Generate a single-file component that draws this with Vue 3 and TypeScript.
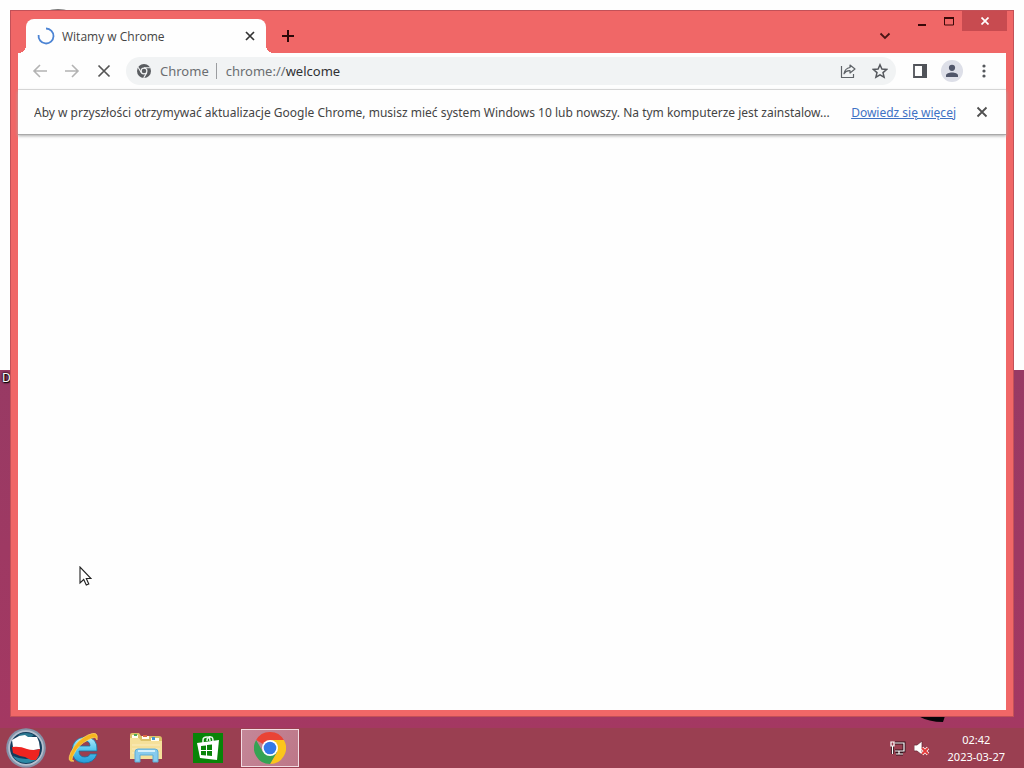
<script setup lang="ts">
import { ref } from 'vue'

const tabTitle = ref('Witamy w Chrome')
const siteLabel = ref('Chrome')
const address = ref('chrome://')
const page = ref('welcome')
const notice = ref(
  'Aby w przyszłości otrzymywać aktualizacje Google Chrome, musisz mieć system Windows 10 lub nowszy. Na tym komputerze jest zainstalow...',
)
const time = ref('02:42')
const date = ref('2023-03-27')
</script>

<template>
  <div class="desktop">
    <main class="workspace">
      <span class="desktop-label">D</span>
      <svg class="speck speck-top" width="24" height="4" viewBox="0 0 24 4"><path d="M0 4Q12 0 24 4z" fill="#777" /></svg>
      <svg class="speck speck-bottom" width="30" height="8" viewBox="0 0 30 8"><path d="M0 0h27l-2 6q-14 0-25-6z" fill="#080408" /></svg>

      <section class="window">
        <header class="titlebar">
          <div class="tab">
            <svg class="spinner" width="18" height="18" viewBox="0 0 18 18"><path d="M9 1.500A7.500 7.500 0 1 1 1.600 8" fill="none" stroke="#4c84d4" stroke-width="1.800" /></svg>
            <span class="tab-title">{{ tabTitle }}</span>
            <button class="icon-button tab-close" aria-label="Zamknij kartę">
              <svg width="10" height="10" viewBox="0 0 10 10"><path d="M1 1l8 8M9 1l-8 8" stroke="#333" stroke-width="1.700" /></svg>
            </button>
          </div>
          <button class="icon-button new-tab" aria-label="Nowa karta">
            <svg width="12" height="12" viewBox="0 0 12 12"><path d="M6 0v12M0 6h12" stroke="#2b0808" stroke-width="2" /></svg>
          </button>
          <span class="spacer"></span>
          <button class="icon-button tab-search" aria-label="Wyszukaj karty">
            <svg width="12" height="8" viewBox="0 0 12 8"><path d="M1.500 1.500L6 6l4.500-4.500" fill="none" stroke="#4a1515" stroke-width="1.800" /></svg>
          </button>
          <div class="caption">
            <button class="icon-button caption-button minimize" aria-label="Minimalizuj">
              <svg width="8" height="12" viewBox="0 0 8 12"><path d="M0 9h8v2H0z" fill="#390909" /></svg>
            </button>
            <button class="icon-button caption-button" aria-label="Maksymalizuj">
              <svg width="10" height="10" viewBox="0 0 10 10"><path d="M.5 1v8h9V1" fill="none" stroke="#390909" /><path d="M0 1h10v2H0z" fill="#390909" /></svg>
            </button>
            <button class="icon-button caption-close" aria-label="Zamknij">
              <svg width="8" height="8" viewBox="0 0 8 8"><path d="M.5.5l7 7M7.500.5l-7 7" stroke="#fff" stroke-width="1.700" /></svg>
            </button>
          </div>
        </header>

        <div class="client">
          <nav class="toolbar">
            <button class="icon-button nav-button" aria-label="Wstecz">
              <svg width="16" height="16" viewBox="0 0 16 16"><path d="M15 8H2M8 2L2 8l6 6" fill="none" stroke="#b3b3b3" stroke-width="1.600" /></svg>
            </button>
            <button class="icon-button nav-button" aria-label="Dalej">
              <svg width="16" height="16" viewBox="0 0 16 16"><path d="M1 8h13M8 2l6 6-6 6" fill="none" stroke="#b3b3b3" stroke-width="1.600" /></svg>
            </button>
            <button class="icon-button nav-button" aria-label="Zatrzymaj">
              <svg width="14" height="14" viewBox="0 0 14 14"><path d="M1.500 1.500l11 11M12.500 1.500l-11 11" stroke="#555" stroke-width="1.700" /></svg>
            </button>
            <div class="omnibox">
              <svg class="site-icon" width="14" height="14" viewBox="0 0 14 14">
                <circle cx="7" cy="7" r="7" fill="#5a5d61" />
                <circle cx="7" cy="7" r="2.900" fill="#5a5d61" stroke="#f1f3f4" stroke-width="1.200" />
                <path d="M7 3.800h6.200M4.200 8.600L1.100 3.200M9.800 8.600l-3.100 5.300" stroke="#f1f3f4" stroke-width="1.100" />
              </svg>
              <span class="site-label">{{ siteLabel }}</span>
              <span class="separator"></span>
              <span class="address">{{ address }}<b>{{ page }}</b></span>
              <button class="icon-button nav-button" aria-label="Udostępnij">
                <svg width="16" height="16" viewBox="0 0 16 16"><path d="M1.500 3v11.500h12V11M10 2l5 4-5 4V7.700Q6 7.400 4 10.800 4.800 5.400 10 4.500z" fill="none" stroke="#5f6368" stroke-width="1.200" stroke-linejoin="round" /></svg>
              </button>
              <button class="icon-button nav-button" aria-label="Dodaj zakładkę">
                <svg width="16" height="16" viewBox="0 0 16 16"><path d="M8 1.800l1.900 4.300 4.700.4-3.600 3.100 1.100 4.600L8 11.800l-4.100 2.400L5 9.600 1.400 6.500l4.700-.4z" fill="none" stroke="#55585d" stroke-width="1.500" /></svg>
              </button>
            </div>
            <button class="icon-button nav-button" aria-label="Panel boczny">
              <svg width="14" height="14" viewBox="0 0 14 14"><path d="M1 1h12v12H1z" fill="none" stroke="#505359" stroke-width="1.800" /><path d="M9 0h5v14H9z" fill="#505359" /></svg>
            </button>
            <button class="icon-button nav-button" aria-label="Profil">
              <svg width="22" height="22" viewBox="0 0 22 22"><circle cx="11" cy="11" r="11" fill="#dddfe8" /><circle cx="11" cy="7.800" r="3.100" fill="#50566a" /><path d="M5 17v-1.500c0-4 12-4 12 0V17z" fill="#50566a" /></svg>
            </button>
            <button class="icon-button nav-button" aria-label="Menu">
              <svg width="4" height="14" viewBox="0 0 4 14" fill="#55585d"><circle cx="2" cy="2" r="1.600" /><circle cx="2" cy="7" r="1.600" /><circle cx="2" cy="12" r="1.600" /></svg>
            </button>
          </nav>
          <div class="infobar">
            <span class="notice">{{ notice }}</span>
            <a class="more" href="#">Dowiedz się więcej</a>
            <button class="icon-button nav-button" aria-label="Zamknij komunikat">
              <svg width="12" height="12" viewBox="0 0 12 12"><path d="M1.500 1.500l9 9M10.500 1.500l-9 9" stroke="#505050" stroke-width="1.800" /></svg>
            </button>
          </div>
          <div class="page"></div>
        </div>
      </section>

      <svg class="pointer" width="13" height="20" viewBox="0 0 13 20"><path d="M1 1v16l3.700-3.500L7.300 19l2.500-1-2.500-5.500H12z" fill="#fff" stroke="#222" stroke-width="1.100" /></svg>
    </main>

    <footer class="taskbar">
      <button class="icon-button start" aria-label="Start">
        <svg width="42" height="40" viewBox="0 0 42 40">
          <circle cx="21" cy="20" r="19.800" fill="#8492a8" />
          <circle cx="21" cy="20" r="17.800" fill="#b5bfce" />
          <circle cx="21" cy="20" r="16" fill="#123c5c" />
          <path d="M8 28q13 6 26 0-4 7-13 7T8 28z" fill="#2b89a5" />
          <path d="M13 7q8-4 16 0l-4 3-9-1z" fill="#2b7891" />
          <path d="M7 12l7-4 6-1 3 2 9 0 2 5 1 7-12 2-15-4z" fill="#fff" />
          <path d="M7 19q8-1 15 2 6 2 13 0l-1 6-3 5-5 0-6-3-5-1-7-3z" fill="#ee2420" />
        </svg>
      </button>
      <button class="icon-button task" aria-label="Internet Explorer">
        <svg width="32" height="32" viewBox="0 0 32 32">
          <defs><linearGradient id="ieBlue" x1="0" y1="0" x2="0" y2="1"><stop stop-color="#b5edff" /><stop offset=".5" stop-color="#54c5ef" /><stop offset="1" stop-color="#239bd8" /></linearGradient></defs>
          <path d="M29 19H11q0 6 6 6 4 0 5-3h7q-3 9-13 9-12-1-12-13Q5 6 17 5q13 0 12 14zM11 14h11q0-5-5-5-6 0-6 5z" fill="url(#ieBlue)" fill-rule="evenodd" stroke="#1b719e" stroke-width=".8" />
          <path d="M6 29q-8 2-3-9Q9 8 20 3q11-5 9 5-1-5-9 0Q10 13 6 22q-4 7 0 7z" fill="#f7b51e" stroke="#ffd868" stroke-width=".7" />
        </svg>
      </button>
      <button class="icon-button task" aria-label="Eksplorator plików">
        <svg width="32" height="30" viewBox="0 0 32 30">
          <path d="M0 2q0-2 2-2h7l2 3h18q3 0 3 3v20H0z" fill="#dbc168" />
          <path d="M2 2h6v3H2zM12 3h7v3h-7zM21 5h8v3h-8z" fill="#fffef0" />
          <path d="M4 1h3v2H4z" fill="#4baa58" /><path d="M13 2h4v2h-4z" fill="#dc6843" /><path d="M22 4h3v3h-3z" fill="#4195ce" />
          <path d="M0 5h9l2 3h21v18H0z" fill="#f5e09a" />
          <path d="M2 12h28M2 16h28M2 20h28" stroke="#faecc0" />
          <path d="M5 29V19q0-3 3-3h17q3 0 3 3v10h-5v-7H10v7z" fill="#87cbed" stroke="#5cacd6" />
          <path d="M8 18h17" stroke="#d4f0fb" stroke-width="2" />
        </svg>
      </button>
      <button class="icon-button task" aria-label="Sklep">
        <svg width="30" height="30" viewBox="0 0 30 30">
          <path d="M0 0h30v30H0z" fill="#088408" />
          <path d="M10 10V7q0-3 4-3 3 0 3 4M14 8q0-5 4-4 2 0 2 4" fill="none" stroke="#edf9ed" stroke-width="1.500" />
          <path d="M4 10l22-3-2 20-17-2z" fill="#fff" />
          <path d="M8 13l5-.5v4.500H8zM14 12l5-.5V17h-5zM8 18h5v4.500L8 22zM14 18h5v5l-5-.5z" fill="#088408" />
        </svg>
      </button>
      <button class="icon-button task active" aria-label="Google Chrome">
        <svg width="32" height="32" viewBox="0 0 32 32">
          <path d="M2.140 8A16 16 0 0 1 29.860 8H16v8z" fill="#ea4335" />
          <path d="M29.860 8A16 16 0 0 1 16 32l7-12L16 8z" fill="#fbc51c" />
          <path d="M2.140 8A16 16 0 0 0 16 32l7-12-7-4-7 4z" fill="#34a353" />
          <circle cx="16" cy="16" r="8" fill="#fff" /><circle cx="16" cy="16" r="6.300" fill="#3479e8" />
        </svg>
      </button>
      <span class="spacer"></span>
      <div class="tray">
        <svg width="16" height="16" viewBox="0 0 16 16"><path d="M5 3h9v8H5M9 11v3M6 14h7M2.500 6v8" fill="none" stroke="#34131c" stroke-width="3" /><path d="M5 3h9v8H5M9 11v3M6 14h7M1 2h3v4H1zM2.500 6v8" fill="none" stroke="#fff" stroke-width="1.200" /></svg>
        <svg width="16" height="16" viewBox="0 0 16 16"><path d="M0 5h3l5-4v14l-5-4H0z" fill="#fff" stroke="#6d2b39" stroke-width=".8" /><path d="M8 8l6 6M14 8l-6 6" stroke="#fff" stroke-width="3.400" /><path d="M8 8l6 6M14 8l-6 6" stroke="#e33b3b" stroke-width="2" /></svg>
      </div>
      <div class="clock"><span>{{ time }}</span><span>{{ date }}</span></div>
    </footer>
  </div>
</template>

<style>
body {
  margin: 0;
}
</style>

<style scoped>
.desktop {
  display: flex;
  flex-direction: column;
  height: 100vh;
  overflow: hidden;
  font-family: "Segoe UI", "Noto Sans", sans-serif;
  font-size: 12px;
  color: #444;
}
.workspace {
  position: relative;
  flex: 1;
  background: linear-gradient(to bottom, #fefefe 0, #fefefe 370px, #983a64 370px, #a43862 100%);
}
.desktop-label {
  position: absolute;
  top: 370px;
  left: 2px;
  line-height: 16px;
  color: #fff;
  text-shadow: 1px 1px 1px #000, 0 0 2px #000, 0 0 3px #000;
}
.speck {
  position: absolute;
}
.speck-top {
  top: 7px;
  left: 46px;
}
.speck-bottom {
  right: 76px;
  bottom: 4px;
}
.window {
  position: absolute;
  inset: 10px 10px 11px;
  box-sizing: border-box;
  display: flex;
  flex-direction: column;
  padding: 0 7px 6px;
  border: 1px solid #c25158;
  background: #f06767;
}
.icon-button {
  display: flex;
  align-items: center;
  justify-content: center;
  flex: none;
  padding: 0;
  border: 0;
  background: none;
}
.spacer {
  flex: 1;
}
.titlebar {
  display: flex;
  height: 42px;
}
.tab {
  position: relative;
  box-sizing: border-box;
  display: flex;
  align-items: center;
  width: 240px;
  height: 34px;
  margin: 8px 0 0 8px;
  padding: 0 10px 0 11px;
  border-radius: 8px 8px 0 0;
  background: #fefefe;
}
.tab::before,
.tab::after {
  position: absolute;
  bottom: 0;
  width: 8px;
  height: 8px;
  content: "";
}
.tab::before {
  right: 100%;
  background: radial-gradient(circle at 0 0, transparent 8px, #fefefe 8px);
}
.tab::after {
  left: 100%;
  background: radial-gradient(circle at 100% 0, transparent 8px, #fefefe 8px);
}
.tab-title {
  flex: 1;
  margin-left: 7px;
  font-family: "Segoe UI", "Open Sans", sans-serif;
}
.tab-close {
  width: 12px;
  height: 16px;
}
.new-tab {
  width: 28px;
  height: 28px;
  margin: 11px 0 0 8px;
}
.tab-search {
  width: 28px;
  height: 28px;
  margin: 11px 9px 0 0;
}
.caption {
  display: flex;
  height: 20px;
  margin-right: -1px;
}
.caption-button {
  width: 27px;
}
.caption-close {
  width: 45px;
  background: #c84b50;
}
.minimize {
  align-items: flex-end;
}
.minimize svg {
  margin-bottom: 4px;
}
.client {
  flex: 1;
  display: flex;
  flex-direction: column;
  background: #fefefe;
}
.toolbar {
  display: flex;
  align-items: center;
  height: 36px;
  padding: 0 6px;
  border-bottom: 1px solid #dedede;
}
.nav-button {
  width: 32px;
  height: 28px;
}
.omnibox {
  flex: 1;
  display: flex;
  align-items: center;
  height: 28px;
  margin: 0 8px 0 6px;
  padding: 0 0 0 11px;
  border-radius: 14px;
  background: #f1f3f4;
  font-size: 13px;
  color: #6b6e71;
}
.site-label {
  margin-left: 9px;
}
.separator {
  width: 1px;
  height: 16px;
  margin: 0 9px 0 7px;
  background: #9b9da0;
}
.address {
  flex: 1;
}
.address b {
  font-weight: 400;
  color: #303134;
}
.infobar {
  display: flex;
  align-items: center;
  height: 44px;
  padding: 0 8px 0 16px;
  border-bottom: 1px solid #a9a9a9;
  box-shadow: 0 1px 3px #aaa;
  white-space: nowrap;
}
.notice {
  flex: 1;
  min-width: 0;
  overflow: hidden;
  text-overflow: ellipsis;
}
.more {
  margin: 0 10px 0 3px;
  color: #3f72c5;
}
.page {
  flex: 1;
}
.pointer {
  position: absolute;
  top: 566px;
  left: 79px;
}
.taskbar {
  display: flex;
  align-items: center;
  height: 40px;
  background: #9a3f51;
  color: #fff;
}
.start {
  width: 51px;
  height: 40px;
  margin-right: 2px;
}
.task {
  width: 58px;
  height: 38px;
  margin: 0 2px;
}
.active {
  box-sizing: border-box;
  border: 1px solid #f3dce3;
  background: linear-gradient(120deg, #c48798, #bd7788);
}
.tray {
  display: flex;
  gap: 8px;
  margin-right: 18px;
}
.clock {
  display: flex;
  flex-direction: column;
  align-items: center;
  margin-right: 19px;
  font-size: 11px;
  line-height: 17px;
}
</style>
